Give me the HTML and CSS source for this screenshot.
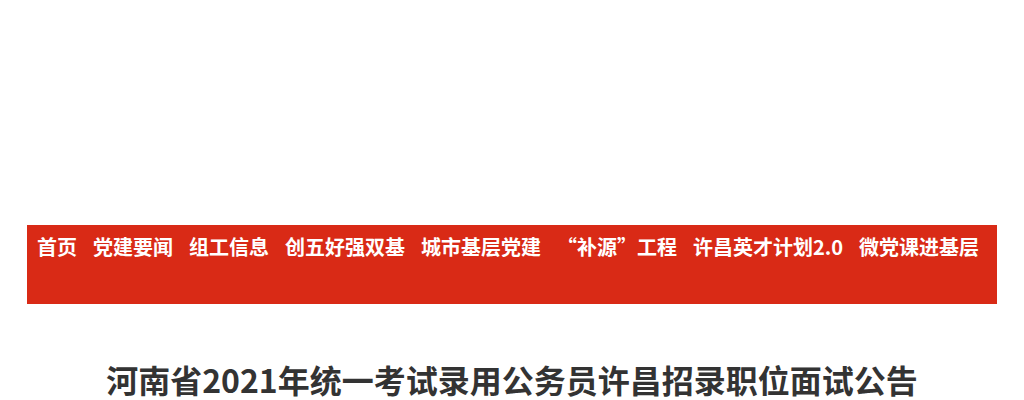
FILE: index.html
```html
<!DOCTYPE html>
<html lang="zh-CN">
<head>
<meta charset="utf-8">
<title>河南省2021年统一考试录用公务员许昌招录职位面试公告</title>
<link rel="stylesheet" href="styles.css">
</head>
<body>
<div class="header-space"></div>
<nav class="nav">
  <a class="nav-item" href="#">首页</a>
  <a class="nav-item" href="#">党建要闻</a>
  <a class="nav-item" href="#">组工信息</a>
  <a class="nav-item" href="#">创五好强双基</a>
  <a class="nav-item" href="#">城市基层党建</a>
  <a class="nav-item" href="#">“补源”工程</a>
  <a class="nav-item" href="#">许昌英才计划2.0</a>
  <a class="nav-item" href="#">微党课进基层</a>
</nav>
<h1 class="title">河南省2021年统一考试录用公务员许昌招录职位面试公告</h1>
</body>
</html>
```

FILE: styles.css
```css
html, body {
  margin: 0;
  padding: 0;
  background: #fff;
}
body {
  font-family: "Noto Sans CJK SC", "Liberation Sans", sans-serif;
}
.header-space {
  height: 225px;
}
.nav {
  box-sizing: border-box;
  width: 970px;
  height: 79px;
  margin-left: 27px;
  padding: 10px 0 0 10px;
  background: #d92a16;
  display: flex;
  gap: 16px;
  align-items: flex-start;
}
.nav-item {
  color: #fff;
  font-size: 20px;
  font-weight: bold;
  line-height: 24px;
  text-decoration: none;
  white-space: nowrap;
}
.title {
  margin: 50px 0 0;
  text-align: center;
  font-size: 32px;
  line-height: 50px;
  font-weight: bold;
  color: #333;
}
```
